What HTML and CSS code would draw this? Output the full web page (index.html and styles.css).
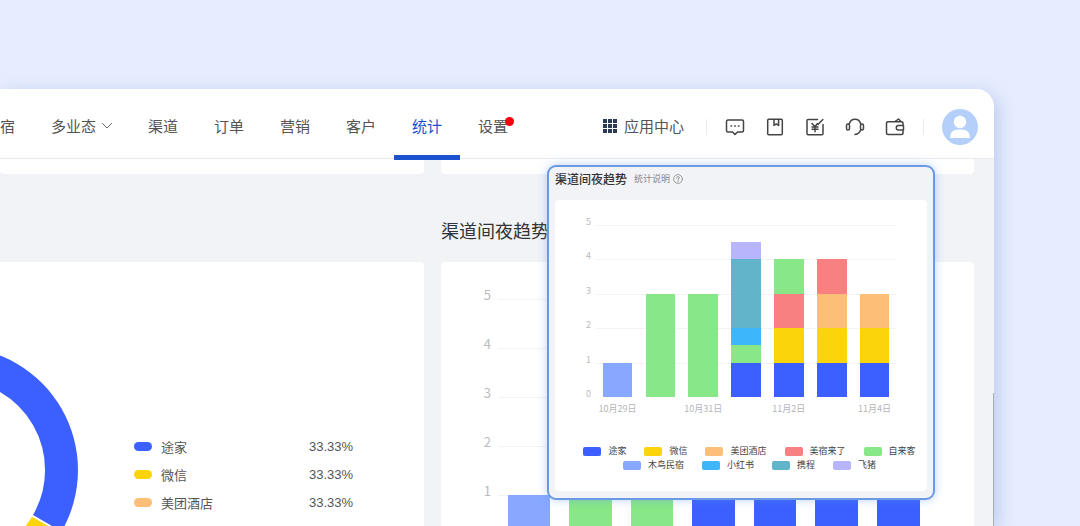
FILE: index.html
```html
<!DOCTYPE html>
<html lang="zh-CN">
<head>
    <meta charset="UTF-8">
    <meta name="viewport" content="width=device-width, initial-scale=1.0">
    <title>统计</title>
    <link rel="stylesheet" href="styles.css">
</head>
<body>
<div class="window">
    <header class="header">
        <nav class="nav">
            <a class="first" href="#">宿</a>
            <a href="#">多业态
                <svg class="arrow" viewBox="0 0 10 6"><path d="M0.5 0.5 L5 5 L9.5 0.5"/></svg>
            </a>
            <a href="#">渠道</a>
            <a href="#">订单</a>
            <a href="#">营销</a>
            <a href="#">客户</a>
            <a class="active" href="#">统计</a>
            <a href="#"><span class="badge">设置</span></a>
        </nav>
        <div class="tools">
            <a class="apps" href="#">
                <svg viewBox="0 0 14 14"><path d="M0 0h4v4H0zM5 0h4v4H5zM10 0h4v4h-4zM0 5h4v4H0zM5 5h4v4H5zM10 5h4v4h-4zM0 10h4v4H0zM5 10h4v4H5zM10 10h4v4h-4z"/></svg>
                应用中心
            </a>
            <i class="line"></i>
            <div class="icons">
                <button type="button" aria-label="消息">
                    <svg viewBox="0 0 20 20"><path d="M3 3h14q1.500 0 1.500 1.500v9q0 1.500-1.500 1.500h-4.500L10 17.500 7.500 15H3q-1.500 0-1.500-1.500v-9Q1.500 3 3 3z"/><path d="M6 9h.6M9.700 9h.6M13.400 9H14"/></svg>
                </button>
                <button type="button" aria-label="收藏">
                    <svg viewBox="0 0 20 20"><rect x="2.700" y="2.200" width="14.600" height="15.600" rx="1"/><path d="M9 2.500v6l2.300-1.600 2.300 1.600v-6"/></svg>
                </button>
                <button type="button" aria-label="账单">
                    <svg viewBox="0 0 20 20"><path d="M12.500 2.500H3q-1 0-1 1v13.200q0 1 1 1h14q1 0 1-1V7.500M17.800 2.500L13 7.500"/><path d="M7 6.500l3 3.300 2.500-3.300M10 9.800v5M7 10h6M7 12.300h6"/></svg>
                </button>
                <button type="button" aria-label="客服">
                    <svg viewBox="0 0 20 20"><path d="M4.200 7Q5.500 2.200 10 2.200T15.800 7M15.800 12.500Q14.500 17 10 17.500"/><rect x="1.500" y="7" width="3" height="6" rx="1.500"/><rect x="15.500" y="7" width="3" height="6" rx="1.500"/></svg>
                </button>
                <button type="button" aria-label="钱包">
                    <svg viewBox="0 0 20 20"><path d="M18 8V6q0-1.200-1.200-1.200H3Q1.500 4.800 1.500 6v10q0 1.500 1.500 1.500h13.800q1.200 0 1.200-1.200V14M10 4.500l3.500-2.500L16 4.500M18.500 8.500h-5.200q-2 0-2 2.300t2 2.300h5.200z"/></svg>
                </button>
            </div>
            <i class="line"></i>
            <button class="avatar" type="button" aria-label="账号">
                <svg viewBox="0 0 36 36"><circle cx="18" cy="13" r="6.200"/><path d="M8 29q0-8.500 8-8.500h4q8 0 8 8.500z"/></svg>
            </button>
        </div>
    </header>

    <main class="main">
        <div class="card top"></div>
        <div class="card top"></div>
        <h2 class="title">渠道间夜趋势</h2>
        <section class="card share">
            <svg class="donut" viewBox="0 0 80 264">
                <path fill="#3c60ff" d="M-45 85 A123 123 0 0 1 61.500 269.500 L33 253 A90 90 0 0 0 -45 118z"/>
                <path fill="#fcd40c" d="M60.500 271 A123 123 0 0 1 -151.500 269.500 L-123 253 A90 90 0 0 0 32 254.800z"/>
            </svg>
            <ul class="share-list">
                <li><i class="blue"></i><span>途家</span><b>33.33%</b></li>
                <li><i class="yellow"></i><span>微信</span><b>33.33%</b></li>
                <li><i class="orange"></i><span>美团酒店</span><b>33.33%</b></li>
            </ul>
        </section>
        <section class="card trend">
            <div class="chart large">
                <ul class="axis"><li>5</li><li>4</li><li>3</li><li>2</li><li>1</li></ul>
                <div class="plot">
                    <div class="grid"><i></i><i></i><i></i><i></i><i></i></div>
                    <div class="bars">
                        <div><i class="sky" style="height:20%"></i></div>
                        <div><i class="green" style="height:60%"></i></div>
                        <div><i class="green" style="height:60%"></i></div>
                        <div><i class="blue" style="height:20%"></i></div>
                        <div><i class="blue" style="height:20%"></i></div>
                        <div><i class="blue" style="height:20%"></i></div>
                        <div><i class="blue" style="height:20%"></i></div>
                    </div>
                </div>
            </div>
        </section>
    </main>
    <i class="scrollbar"></i>

    <section class="popup">
        <header>
            <h3>渠道间夜趋势</h3>
            <a href="#">统计说明
                <svg viewBox="0 0 10 10"><circle cx="5" cy="5" r="4.400"/><path d="M3.600 4q0-1.400 1.400-1.400T6.400 3.900Q6.400 4.700 5 5.300V6M5 7v.8"/></svg>
            </a>
        </header>
        <div class="panel">
            <div class="chart">
                <ul class="axis"><li>5</li><li>4</li><li>3</li><li>2</li><li>1</li><li>0</li></ul>
                <div class="plot">
                    <div class="grid"><i></i><i></i><i></i><i></i><i></i></div>
                    <div class="bars">
                        <div><i class="sky" style="height:20%"></i></div>
                        <div><i class="green" style="height:60%"></i></div>
                        <div><i class="green" style="height:60%"></i></div>
                        <div>
                            <i class="purple" style="height:10%"></i>
                            <i class="teal" style="height:40%"></i>
                            <i class="cyan" style="height:10%"></i>
                            <i class="green" style="height:10%"></i>
                            <i class="blue" style="height:20%"></i>
                        </div>
                        <div>
                            <i class="green" style="height:20%"></i>
                            <i class="red" style="height:20%"></i>
                            <i class="yellow" style="height:20%"></i>
                            <i class="blue" style="height:20%"></i>
                        </div>
                        <div>
                            <i class="red" style="height:20%"></i>
                            <i class="orange" style="height:20%"></i>
                            <i class="yellow" style="height:20%"></i>
                            <i class="blue" style="height:20%"></i>
                        </div>
                        <div>
                            <i class="orange" style="height:20%"></i>
                            <i class="yellow" style="height:20%"></i>
                            <i class="blue" style="height:20%"></i>
                        </div>
                    </div>
                </div>
                <div class="dates">
                    <span>10月29日</span><span></span><span>10月31日</span><span></span><span>11月2日</span><span></span><span>11月4日</span>
                </div>
            </div>
            <ul class="legend">
                <li><i class="blue"></i>途家</li>
                <li><i class="yellow"></i>微信</li>
                <li><i class="orange"></i>美团酒店</li>
                <li><i class="red"></i>美宿来了</li>
                <li><i class="green"></i>自来客</li>
                <li><i class="sky"></i>木鸟民宿</li>
                <li><i class="cyan"></i>小红书</li>
                <li><i class="teal"></i>携程</li>
                <li><i class="purple"></i>飞猪</li>
            </ul>
        </div>
    </section>
</div>
</body>
</html>
```
FILE: styles.css
```css
*{ box-sizing: border-box;}
body{ margin: 0; height: 100vh; overflow: hidden; display: flex; background: #e7edfe; color: #555;
    font-family: "Noto Sans CJK SC", sans-serif; font-size: 15px;}
ul{ margin: 0; padding: 0; list-style: none;}
h2,h3{ margin: 0; font-weight: 400; color: #333;}
a{ color: inherit; text-decoration: none;}
button{ padding: 0; border: 0; background: none;}
svg{ display: block; fill: none; stroke-linecap: round; stroke-linejoin: round;}
i{ display: block;}

.blue{ background: #3c60ff;}
.yellow{ background: #fcd40c;}
.orange{ background: #fdbe78;}
.red{ background: #f98080;}
.green{ background: #88e887;}
.sky{ background: #88a8ff;}
.cyan{ background: #3eb6fb;}
.teal{ background: #62b4ca;}
.purple{ background: #b7b5fb;}

.window{ position: relative; flex: 1; display: flex; flex-direction: column; margin: 89px 86px 0 0;
    background: #f1f3f7; border-radius: 0 18px 0 0; box-shadow: 4px 4px 18px rgba(120,150,215,.4);}

/* 顶部导航 */
.header{ position: relative; z-index: 1; flex: none; display: flex; justify-content: space-between; height: 70px;
    padding: 6px 16px 0 0; background: #fff; border-bottom: 1px solid #e8e9ec; border-radius: 0 18px 0 0;}
.nav{ display: flex; margin-bottom: -2px;}
.nav a{ display: flex; align-items: center; gap: 6px; padding: 1px 18px 0; border-bottom: 5px solid transparent; white-space: nowrap;}
.nav .first{ padding-left: 0;}
.nav .active{ color: #1c52d0; border-color: #1c52d0;}
.arrow{ width: 10px; height: 6px; stroke: #666;}
.badge{ position: relative;}
.badge::after{ content: ""; position: absolute; top: 2px; right: -6px; width: 9px; height: 9px; border-radius: 50%; background: #f5000c;}
.tools{ display: flex; align-items: center; gap: 18px;}
.apps{ display: flex; align-items: center; gap: 7px; margin-right: 4px; line-height: 22px; padding-bottom: 1px; white-space: nowrap;}
.apps svg{ width: 14px; height: 14px; fill: #2b3a55;}
.line{ width: 1px; height: 16px; background: #e9ebee;}
.icons{ display: flex; gap: 20px;}
.icons svg{ width: 20px; height: 20px; stroke: #444; stroke-width: 1.5;}
.avatar{ width: 36px; height: 36px; border-radius: 50%; background: #b5cffb;}
.avatar svg{ fill: #fff;}

/* 内容区 */
.main{ flex: 1; min-height: 0; overflow: hidden; display: grid; grid-template: 15px 88px 1fr / 424fr 533fr;
    column-gap: 17px; padding-right: 20px;}
.card{ min-width: 0; min-height: 0; background: #fff; border-radius: 4px 4px 0 0;}
.top{ border-radius: 0 0 4px 4px;}
.title{ grid-column: 2; padding-top: 25px; font-size: 18px; line-height: 62px;}
.share{ display: flex; border-top-left-radius: 0;}
.donut{ flex: none; width: 80px; height: 264px;}
.share-list{ margin: 170px 0 0 54px;}
.share-list li{ display: flex; align-items: center; height: 28px; font-size: 13px;}
.share-list i{ width: 18px; height: 9px; margin-right: 9px; border-radius: 5px;}
.share-list span{ width: 148px;}
.share-list b{ font-family: "Liberation Sans", sans-serif; font-weight: 400;}
.trend{ padding: 37px 45px 0 40px;}
.scrollbar{ position: absolute; right: 0; top: 304px; bottom: 0; width: 1px; background: #a9adb5;}

/* 柱状图 */
.chart{ display: grid; grid-template: 172px auto / 8px 1fr; column-gap: 5px;}
.axis{ height: 100%; margin-top: -10px; color: #bbb; font-size: 9px; line-height: 14px; text-align: right;}
.axis li{ height: 20%;}
.plot{ display: grid;}
.grid,.bars{ grid-area: 1 / 1; display: flex; min-height: 0;}
.grid{ flex-direction: column;}
.grid i{ flex: 1; border-top: 1px solid #f3f3f5;}
.bars div{ flex: 1; display: flex; flex-direction: column; justify-content: flex-end; align-items: center;}
.bars i{ width: 69%;}
.dates{ grid-column: 2; display: flex; color: #b5b5ba; font-size: 9px; line-height: 14px; padding-top: 5px;}
.dates span{ flex: 1; display: flex; justify-content: center; white-space: nowrap;}
.large{ grid-template: 245px / 10px 1fr; column-gap: 7px;}
.large .axis{ margin-top: -14px; font-size: 13px; line-height: 20px;}

/* 浮层 */
.popup{ position: absolute; z-index: 2; top: 76px; right: 59px; width: 388px; padding: 0 6px 7px; background: #f1f3f7;
    border: 2px solid #6c99e3; border-radius: 9px; box-shadow: 0 0 10px rgba(90,145,245,.4);}
.popup header{ display: flex; align-items: center; gap: 7px; height: 33px; padding-bottom: 10px;}
.popup h3{ font-size: 12px; font-weight: 500;}
.popup header a{ display: flex; align-items: center; gap: 3px; color: #888; font-size: 9px;}
.popup header svg{ width: 10px; height: 10px; stroke: #888; stroke-width: .8;}
.panel{ padding: 25px 31px 19px 28px; background: #fff; border-radius: 4px;}
.legend{ display: flex; flex-wrap: wrap; justify-content: center; gap: 0 18px; margin: 28px -31px 0 -11px; color: #444; font-size: 9px; line-height: 14px;}
.legend li{ display: flex; align-items: center; gap: 7px;}
.legend i{ width: 18px; height: 9px; border-radius: 2px;}
```
